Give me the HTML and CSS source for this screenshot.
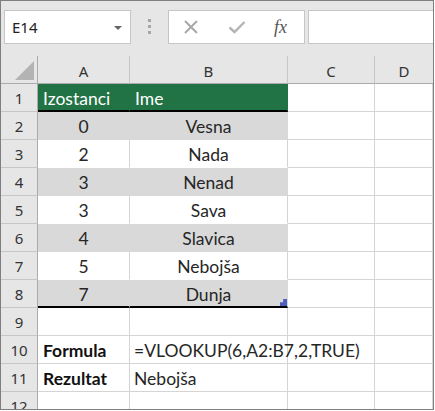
FILE: index.html
```html
<!DOCTYPE html>
<html lang="sr">
<head>
    <meta charset="UTF-8">
    <title>VLOOKUP</title>
    <link rel="stylesheet" href="styles.css">
</head>
<body>
<div class="frame">
    <div class="toolbar">
        <div class="name-box">
            <span>E14</span>
            <span class="drop-arrow"></span>
        </div>
        <div class="dots"><i></i><i></i><i></i></div>
        <div class="fx-box">
            <svg class="icon" width="16" height="16" viewBox="0 0 16 16">
                <path d="M2 2 L14 14 M14 2 L2 14" stroke="#a8a8a8" stroke-width="2" fill="none"/>
            </svg>
            <svg class="icon" width="18" height="16" viewBox="0 0 18 16">
                <path d="M1.5 8.5 L6.5 13 L16.5 3" stroke="#b4b4b4" stroke-width="2.4" fill="none"/>
            </svg>
            <span class="fx">fx</span>
        </div>
        <div class="formula-box"></div>
    </div>

    <div class="sheet">
        <!-- zaglavlje kolona -->
        <div class="corner"><span class="tri"></span></div>
        <div class="col-head">A</div>
        <div class="col-head">B</div>
        <div class="col-head">C</div>
        <div class="col-head last">D</div>

        <div class="row-head">1</div>
        <div class="cell th">Izostanci</div>
        <div class="cell th">Ime</div>
        <div class="cell"></div>
        <div class="cell"></div>

        <div class="row-head">2</div>
        <div class="cell band num">0</div>
        <div class="cell band name">Vesna</div>
        <div class="cell"></div>
        <div class="cell"></div>

        <div class="row-head">3</div>
        <div class="cell plain num">2</div>
        <div class="cell plain name">Nada</div>
        <div class="cell"></div>
        <div class="cell"></div>

        <div class="row-head">4</div>
        <div class="cell band num">3</div>
        <div class="cell band name">Nenad</div>
        <div class="cell"></div>
        <div class="cell"></div>

        <div class="row-head">5</div>
        <div class="cell plain num">3</div>
        <div class="cell plain name">Sava</div>
        <div class="cell"></div>
        <div class="cell"></div>

        <div class="row-head">6</div>
        <div class="cell band num">4</div>
        <div class="cell band name">Slavica</div>
        <div class="cell"></div>
        <div class="cell"></div>

        <div class="row-head">7</div>
        <div class="cell plain num">5</div>
        <div class="cell plain name">Nebojša</div>
        <div class="cell"></div>
        <div class="cell"></div>

        <div class="row-head">8</div>
        <div class="cell band num end">7</div>
        <div class="cell band name end">Dunja<span class="handle"></span></div>
        <div class="cell"></div>
        <div class="cell"></div>

        <div class="row-head">9</div>
        <div class="cell"></div>
        <div class="cell"></div>
        <div class="cell"></div>
        <div class="cell"></div>

        <div class="row-head">10</div>
        <div class="cell label">Formula</div>
        <div class="cell text over">=VLOOKUP(6,A2:B7,2,TRUE)</div>
        <div class="cell"></div>
        <div class="cell"></div>

        <div class="row-head">11</div>
        <div class="cell label">Rezultat</div>
        <div class="cell text">Nebojša</div>
        <div class="cell"></div>
        <div class="cell"></div>

        <div class="row-head">12</div>
        <div class="cell"></div>
        <div class="cell"></div>
        <div class="cell"></div>
        <div class="cell"></div>
    </div>
</div>
</body>
</html>
```

FILE: styles.css
```css
body, html {
    margin: 0;
    padding: 0;
    background: #fff;
}

.frame {
    width: 434px;
    height: 410px;
    box-sizing: border-box;
    border: 1px solid #7f7f7f;
    background: #e6e6e6;
    overflow: hidden;
    font-family: Lato, "Open Sans", sans-serif;
    color: #262626;
}

/* traka s formulom */
.toolbar {
    height: 55px;
    box-sizing: border-box;
    padding: 9px 0 0 3px;
    display: flex;
    align-items: flex-start;
}
.name-box {
    width: 127px;
    height: 34px;
    box-sizing: border-box;
    border: 1px solid #c6c6c6;
    background: #fff;
    display: flex;
    align-items: center;
    justify-content: space-between;
    padding: 0 8px 0 7px;
    font-family: "Noto Sans", sans-serif;
    font-size: 15px;
    color: #222;
}
.drop-arrow {
    width: 0;
    height: 0;
    border-left: 4px solid transparent;
    border-right: 4px solid transparent;
    border-top: 4px solid #666;
    margin-top: 1px;
}
.dots {
    width: 3px;
    margin: 9px 17px 0 17px;
    display: flex;
    flex-direction: column;
    gap: 3px;
}
.dots i {
    display: block;
    width: 3px;
    height: 3px;
    background: #a6a6a6;
}
.fx-box {
    width: 137px;
    height: 34px;
    box-sizing: border-box;
    border: 1px solid #c6c6c6;
    background: #fff;
    display: flex;
    align-items: center;
    padding-left: 14px;
    gap: 29px;
}
.fx {
    font-family: "Liberation Serif", serif;
    font-style: italic;
    font-size: 18px;
    color: #555;
    margin-left: -1px;
}
.formula-box {
    flex: 1;
    height: 34px;
    box-sizing: border-box;
    border: 1px solid #c6c6c6;
    border-right: none;
    background: #fff;
    margin-left: 3px;
}

/* tabela */
.sheet {
    display: grid;
    grid-template-columns: 37px 92px 158px 87px 1fr;
    grid-auto-rows: 28px;
}
.corner, .col-head, .row-head {
    background: #e6e6e6;
    box-sizing: border-box;
    font-family: "Noto Sans", sans-serif;
    font-size: 15px;
    color: #333;
    display: flex;
    align-items: center;
    justify-content: center;
}
.corner {
    border-right: 1px solid #ababab;
    border-bottom: 1px solid #ababab;
    position: relative;
}
.tri {
    position: absolute;
    right: 3px;
    bottom: 3px;
    width: 0;
    height: 0;
    border-left: 19px solid transparent;
    border-bottom: 19px solid #b3b3b3;
}
.col-head {
    border-right: 1px solid #c6c6c6;
    border-bottom: 1px solid #ababab;
    padding-top: 2px;
}
.col-head.last {
    border-right: none;
}
.row-head {
    border-right: 1px solid #ababab;
    border-bottom: 1px solid #c6c6c6;
    padding-top: 1px;
}

.cell {
    background: #fff;
    box-sizing: border-box;
    border-right: 1px solid #d4d4d4;
    border-bottom: 1px solid #d4d4d4;
    font-size: 17.5px;
    display: flex;
    align-items: center;
    white-space: nowrap;
    padding: 1px 5px 0 5px;
    position: relative;
}
.th {
    background: #217346;
    color: #fff;
    border-right-color: #217346;
    border-bottom: 2px solid #000;
    padding-top: 2px;
}
.band {
    background: #d9d9d9;
    border-right-color: #d9d9d9;
    border-bottom-color: #d9d9d9;
}
.plain {
    border-bottom-color: #fff;
}
.num, .name {
    justify-content: center;
}
.end {
    border-bottom: 2px solid #000;
    padding-top: 2px;
}
.handle {
    position: absolute;
    right: 0;
    bottom: 0;
    width: 7px;
    height: 7px;
    background: #4a5fbf;
    clip-path: polygon(100% 0, 100% 100%, 0 100%, 0 45%, 45% 45%, 45% 0);
}
.label {
    font-weight: bold;
    color: #111;
}
.text {
    padding-left: 4px;
}
.over {
    overflow: visible;
    z-index: 1;
}
```
